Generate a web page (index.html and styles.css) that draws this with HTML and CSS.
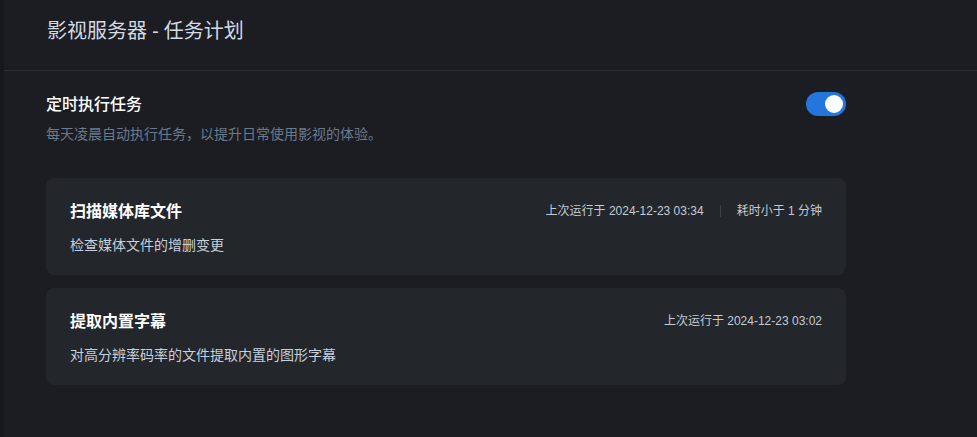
FILE: index.html
```html
<!DOCTYPE html>
<html lang="zh">
<head>
<meta charset="utf-8">
<link rel="stylesheet" href="styles.css">
</head>
<body>
<div class="app">
  <div class="strip"></div>
  <div class="main">
    <header class="header">影视服务器 - 任务计划</header>
    <section class="content">
      <div class="setting">
        <div class="setting-text">
          <div class="setting-title">定时执行任务</div>
          <div class="setting-desc">每天凌晨自动执行任务，以提升日常使用影视的体验。</div>
        </div>
        <div class="toggle"><div class="knob"></div></div>
      </div>
      <div class="cards">
        <div class="card">
          <div class="card-head">
            <div class="card-title">扫描媒体库文件</div>
            <div class="meta">
              <span>上次运行于 2024-12-23 03:34</span>
              <span class="divider"></span>
              <span>耗时小于 1 分钟</span>
            </div>
          </div>
          <div class="card-desc">检查媒体文件的增删变更</div>
        </div>
        <div class="card">
          <div class="card-head">
            <div class="card-title">提取内置字幕</div>
            <div class="meta">
              <span>上次运行于 2024-12-23 03:02</span>
            </div>
          </div>
          <div class="card-desc">对高分辨率码率的文件提取内置的图形字幕</div>
        </div>
      </div>
    </section>
  </div>
</div>
</body>
</html>
```

FILE: styles.css
```css
* { box-sizing: border-box; }
html, body {
  margin: 0;
  padding: 0;
  height: 100%;
  background: #1b1d22;
  font-family: "Noto Sans", "Noto Sans CJK SC", sans-serif;
}
.app {
  display: flex;
  height: 437px;
  overflow: hidden;
}
.strip {
  width: 4px;
  flex: none;
  background: #16181b;
}
.main {
  flex: 1;
  display: flex;
  flex-direction: column;
}
.header {
  height: 71px;
  padding: 16px 0 0 43px;
  font-size: 20px;
  line-height: 30px;
  color: #d4dae2;
  border-bottom: 1px solid #2b2e33;
}
.content {
  padding: 21px 0 0 42px;
  width: 842px;
}
.setting {
  display: flex;
  justify-content: space-between;
  align-items: flex-start;
}
.setting-title {
  font-size: 16px;
  line-height: 24px;
  font-weight: 500;
  color: #ffffff;
}
.setting-desc {
  margin-top: 7px;
  font-size: 14px;
  line-height: 22px;
  color: #6a7a8f;
}
.toggle {
  margin-top: 0;
  width: 40px;
  height: 24px;
  border-radius: 12px;
  background: #2476df;
  display: flex;
  align-items: center;
  justify-content: flex-end;
  padding-right: 3px;
}
.knob {
  width: 18px;
  height: 18px;
  border-radius: 50%;
  background: #ffffff;
}
.cards {
  margin-top: 33px;
  display: flex;
  flex-direction: column;
  gap: 13px;
}
.card {
  background: #23262b;
  border-radius: 8px;
  padding: 21px 24px 0 24px;
  height: 97px;
}
.card-head {
  display: flex;
  justify-content: space-between;
  align-items: center;
  height: 24px;
}
.card-title {
  font-size: 16px;
  line-height: 24px;
  font-weight: 700;
  color: #ffffff;
}
.meta {
  display: flex;
  align-items: center;
  gap: 16px;
  font-family: "Liberation Sans", "Noto Sans CJK SC", sans-serif;
  font-size: 12px;
  line-height: 20px;
  color: #c4ccd6;
}
.divider {
  width: 1px;
  height: 12px;
  background: #3c4148;
}
.card-desc {
  margin-top: 11px;
  font-size: 14px;
  line-height: 22px;
  color: #c6d0dc;
}
```
